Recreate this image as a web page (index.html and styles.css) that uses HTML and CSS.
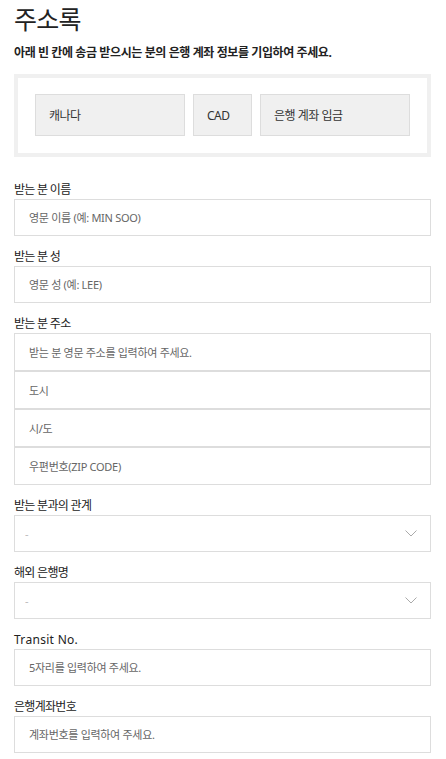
FILE: index.html
```html
<!DOCTYPE html>
<html lang="ko">
<head>
  <meta charset="UTF-8">
  <title>주소록</title>
  <link rel="stylesheet" href="styles.css">
</head>
<body>

  <h1>주소록</h1>
  <p class="desc">아래 빈 칸에 송금 받으시는 분의 은행 계좌 정보를 기입하여 주세요.</p>

  <div class="summary">
    <div class="chip">캐나다</div>
    <div class="chip">CAD</div>
    <div class="chip">은행 계좌 입금</div>
  </div>

  <div class="field first">
    <label>받는 분 이름</label>
    <input type="text" placeholder="영문 이름 (예: MIN SOO)">
  </div>

  <div class="field">
    <label>받는 분 성</label>
    <input type="text" placeholder="영문 성 (예: LEE)">
  </div>

  <div class="field">
    <label>받는 분 주소</label>
    <div class="stack">
      <input type="text" placeholder="받는 분 영문 주소를 입력하여 주세요.">
      <input type="text" placeholder="도시">
      <input type="text" placeholder="시/도">
      <input type="text" placeholder="우편번호(ZIP CODE)">
    </div>
  </div>

  <div class="field">
    <label>받는 분과의 관계</label>
    <div class="select-wrap">
      <select><option>-</option></select>
      <svg class="chevron" width="12" height="7" viewBox="0 0 12 7"><path d="M0.5 0.5 L6 6 L11.5 0.5" fill="none" stroke="#aaa" stroke-width="1"/></svg>
    </div>
  </div>

  <div class="field">
    <label>해외 은행명</label>
    <div class="select-wrap">
      <select><option>-</option></select>
      <svg class="chevron" width="12" height="7" viewBox="0 0 12 7"><path d="M0.5 0.5 L6 6 L11.5 0.5" fill="none" stroke="#aaa" stroke-width="1"/></svg>
    </div>
  </div>

  <div class="field">
    <label class="latin">Transit No.</label>
    <input type="text" placeholder="5자리를 입력하여 주세요.">
  </div>

  <div class="field">
    <label>은행계좌번호</label>
    <input type="text" placeholder="계좌번호를 입력하여 주세요.">
  </div>

</body>
</html>
```

FILE: styles.css
```css
* {
  box-sizing: border-box;
}

html, body {
  margin: 0;
  background: #fff;
}

body {
  padding: 4px 15px 0 14px;
  font-family: "Noto Sans", "Noto Sans CJK KR", sans-serif;
  color: #333;
  overflow: hidden;
}

h1 {
  margin: 0;
  font-size: 25px;
  line-height: 30px;
  font-weight: 400;
  color: #222;
  letter-spacing: -0.8px;
}

.desc {
  margin: 10px 0 12px 0;
  font-size: 12px;
  line-height: 18px;
  font-weight: 700;
  color: #222;
  letter-spacing: -0.4px;
}

.summary {
  border: 4px solid #f0f0f0;
  padding: 16px 17px 17px 17px;
  display: grid;
  grid-template-columns: 1fr 59px 1fr;
  gap: 8px;
}

.chip {
  height: 42px;
  background: #f0f0f0;
  border: 1px solid #ddd;
  padding-left: 13px;
  display: flex;
  align-items: center;
  font-size: 12px;
  color: #333;
  letter-spacing: -0.5px;
}

.field {
  margin-top: 12px;
}

.field.first {
  margin-top: 24px;
}

label {
  display: block;
  font-size: 12px;
  line-height: 18px;
  color: #222;
  letter-spacing: -0.7px;
}

label.latin {
  letter-spacing: 0.3px;
}

input, select {
  display: block;
  width: 100%;
  height: 37px;
  margin: 0;
  border: 1px solid #ddd;
  border-radius: 0;
  background: #fff;
  padding: 0 14px;
  font-family: "Noto Sans", "Noto Sans CJK KR", sans-serif;
  font-size: 11px;
  color: #666;
  letter-spacing: -0.3px;
  outline: none;
}

input::placeholder {
  color: #666;
}

.stack input {
  height: 38px;
}

.select-wrap {
  position: relative;
}

select {
  appearance: none;
  -webkit-appearance: none;
  padding-left: 10px;
  color: #bbb;
}

.chevron {
  position: absolute;
  right: 14px;
  top: 15px;
}
```
